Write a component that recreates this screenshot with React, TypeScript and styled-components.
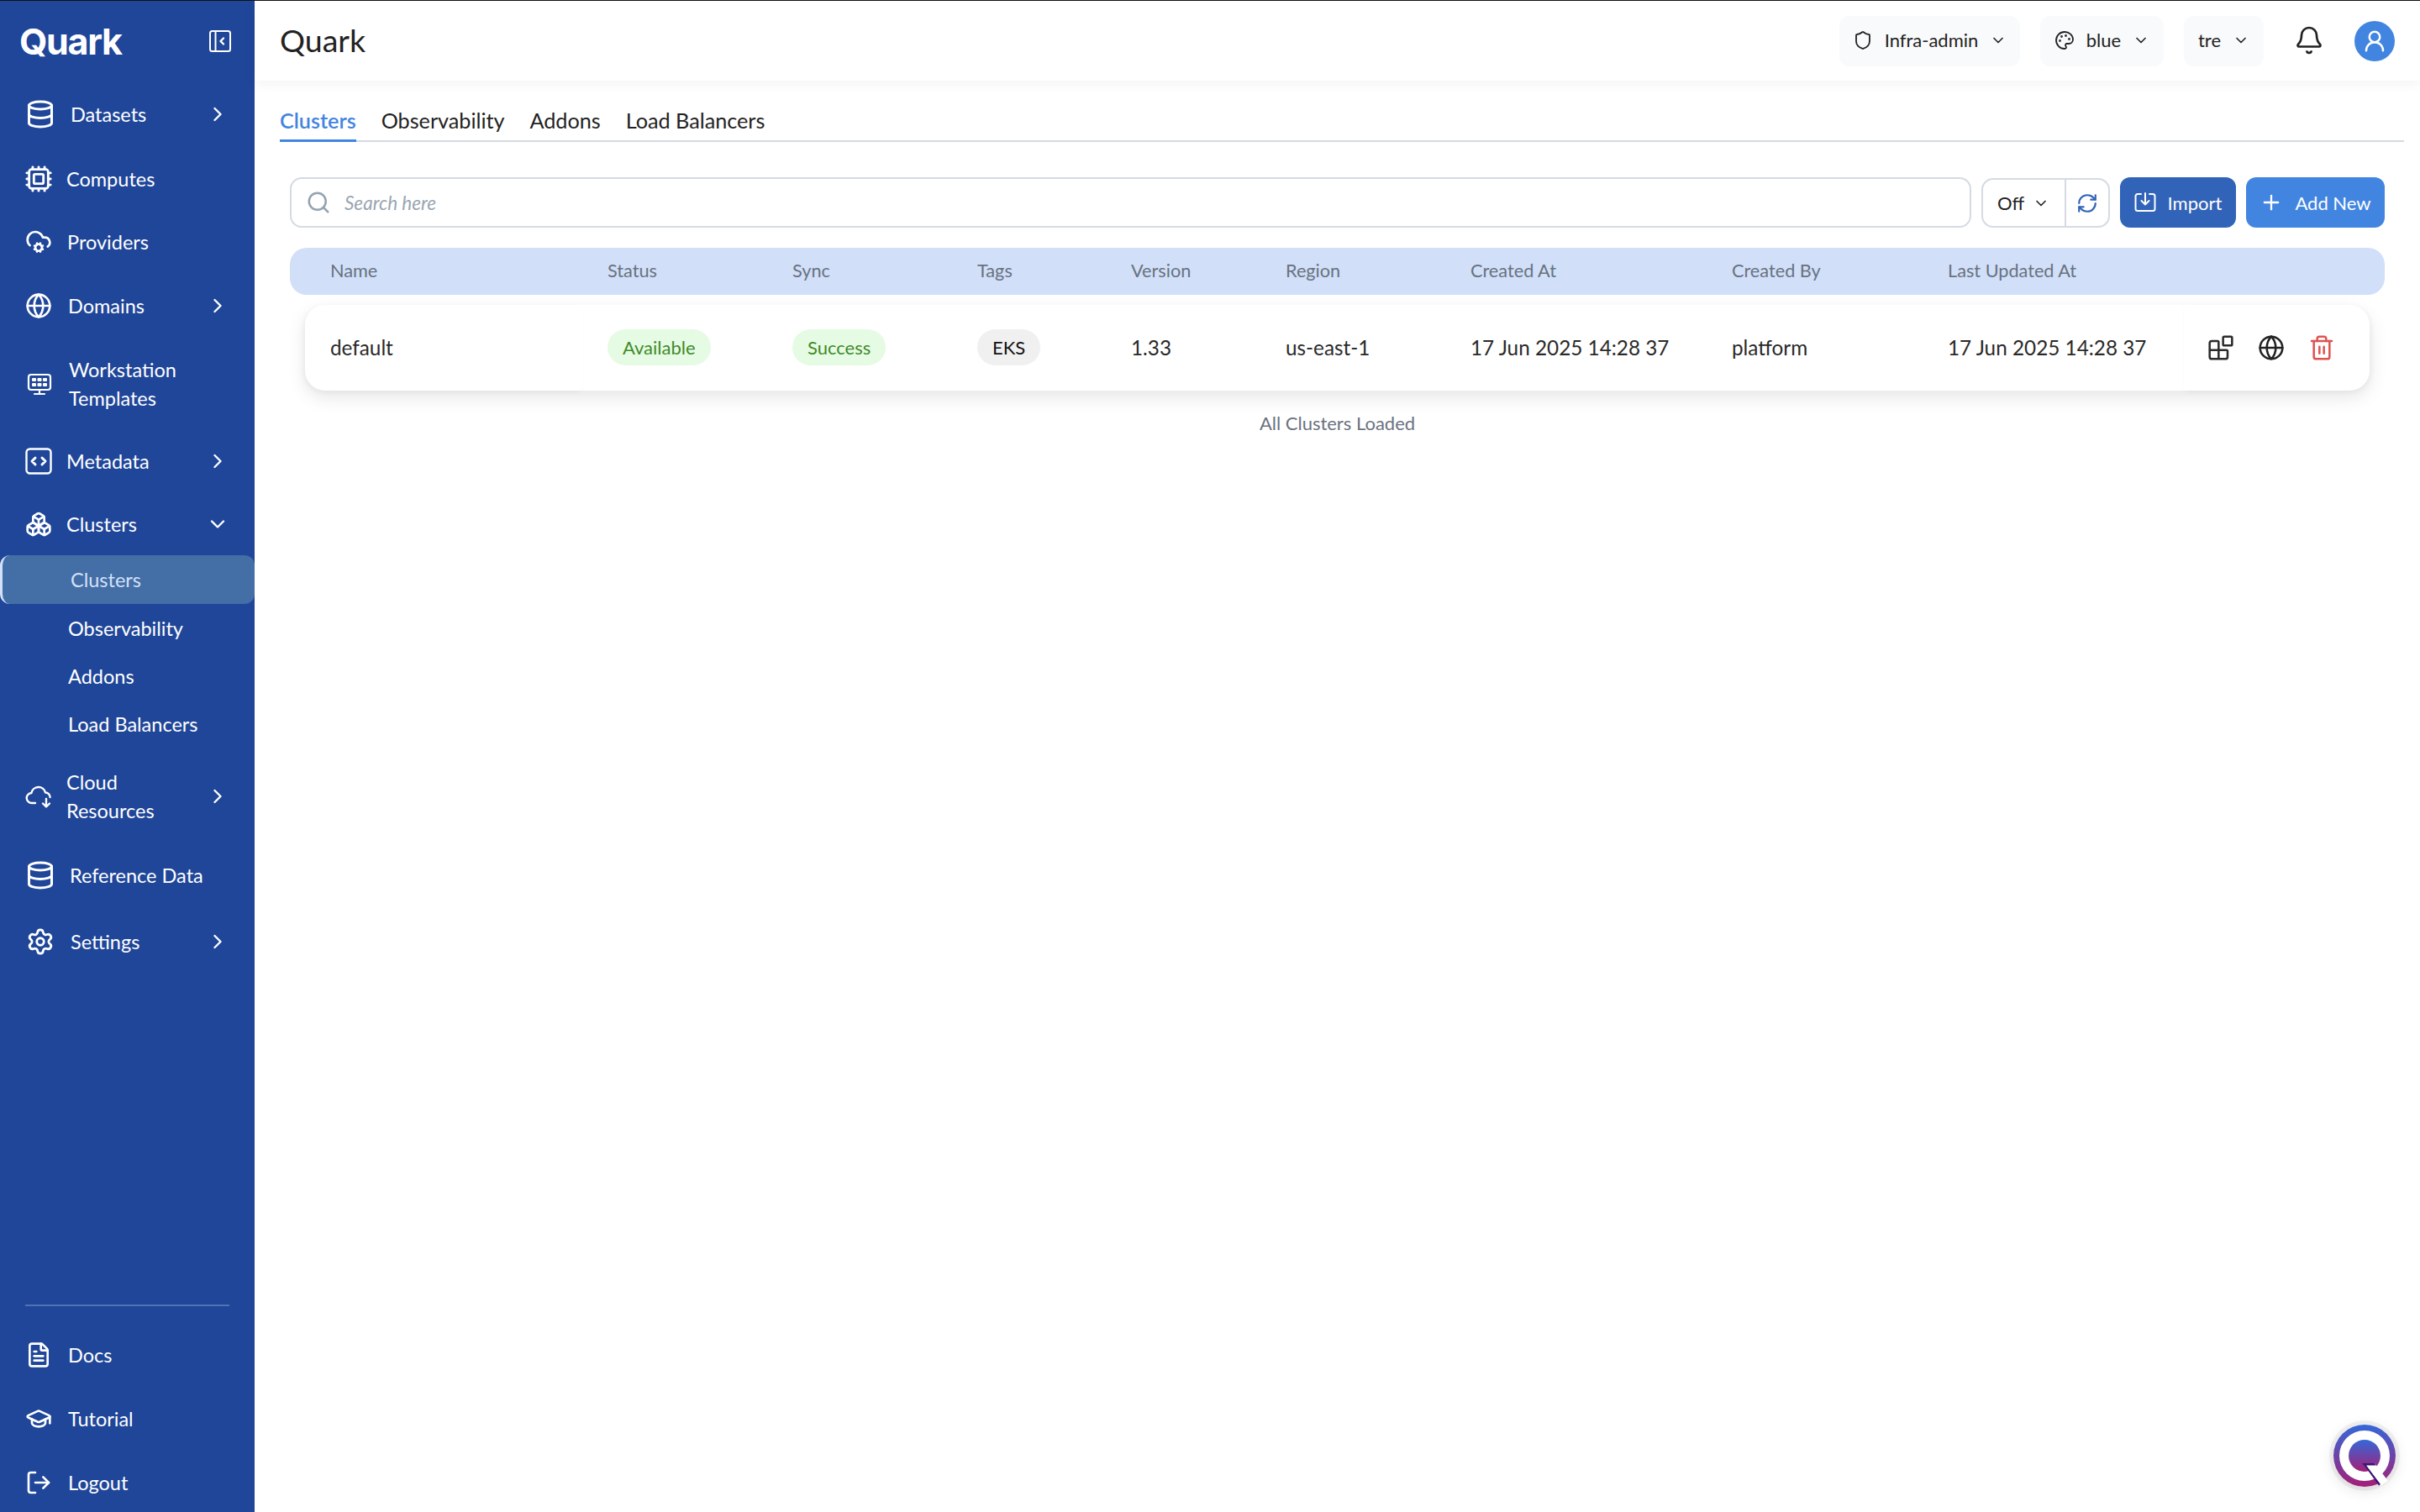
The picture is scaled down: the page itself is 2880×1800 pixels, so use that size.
import React from "react";
import styled, { createGlobalStyle } from "styled-components";
import {
  Bell,
  Blocks,
  Boxes,
  ChevronDown,
  ChevronRight,
  CloudCog,
  Cpu,
  Database,
  FileText,
  Globe,
  GraduationCap,
  LogOut,
  Palette,
  Plus,
  RefreshCw,
  Search,
  Settings,
  Shield,
  Trash2,
  UserRound,
} from "lucide-react";

const FONT = `Lato, "Noto Sans", sans-serif`;

const GlobalStyle = createGlobalStyle`
  html, body, #root { height: 100%; }
  body {
    margin: 0;
    background: #fff;
    font-family: ${FONT};
    color: #222;
  }
  * { box-sizing: border-box; }
`;

const WorkstationIcon = () => (
  <svg width="30" height="30" viewBox="0 0 30 30" fill="none" stroke="#fff" strokeWidth="2.2" strokeLinecap="round" strokeLinejoin="round">
    <rect x="2" y="4" width="26" height="18" rx="3" />
    <path d="M15 22v5M9 27h12" />
    <g fill="#fff" stroke="none">
      <rect x="6" y="8" width="5" height="4" rx="1" />
      <rect x="12.5" y="8" width="5" height="4" rx="1" />
      <rect x="19" y="8" width="5" height="4" rx="1" />
      <rect x="6" y="14" width="5" height="4" rx="1" />
      <rect x="12.5" y="14" width="5" height="4" rx="1" />
      <rect x="19" y="14" width="5" height="4" rx="1" />
    </g>
  </svg>
);

const MetadataIcon = () => (
  <svg width="32" height="32" viewBox="0 0 32 32" fill="none" stroke="#fff" strokeWidth="2.4" strokeLinecap="round" strokeLinejoin="round">
    <rect x="1.5" y="1.5" width="29" height="29" rx="4" />
    <path d="M12 12l-4 4 4 4M20 12l4 4-4 4" strokeWidth="3" />
  </svg>
);

const CloudResourcesIcon = () => (
  <svg width="32" height="32" viewBox="0 0 32 32" fill="none" stroke="#fff" strokeWidth="2.4" strokeLinecap="round" strokeLinejoin="round">
    <path d="M12 24H8a6 6 0 0 1-.6-12A8.5 8.5 0 0 1 24 11.5a5.6 5.6 0 0 1 5.6 5.5" />
    <path d="M25 19v9M21 24.5l4 4 4-4" />
  </svg>
);

const CollapseIcon = () => (
  <svg width="26" height="26" viewBox="0 0 26 26" fill="none" stroke="#fff" strokeWidth="2" strokeLinecap="round" strokeLinejoin="round">
    <rect x="1" y="1" width="24" height="24" rx="2.5" />
    <path d="M7.5 1v24" />
    <path d="M17 9.5L13.5 13l3.5 3.5" strokeWidth="2.4" />
  </svg>
);

const ImportIcon = () => (
  <svg width="26" height="26" viewBox="0 0 26 26" fill="none" stroke="#fff" strokeWidth="2" strokeLinecap="round" strokeLinejoin="round">
    <path d="M8 3H4a2.5 2.5 0 0 0-2.5 2.5v15A2.5 2.5 0 0 0 4 23h18a2.5 2.5 0 0 0 2.5-2.5v-15A2.5 2.5 0 0 0 22 3h-4" />
    <path d="M13 2v13M8.5 11l4.5 4.5 4.5-4.5" />
  </svg>
);

const QuarkBadge = () => (
  <svg width="74" height="74" viewBox="0 0 74 74">
    <defs>
      <linearGradient id="quarkGrad" x1="0" y1="0" x2="0" y2="1">
        <stop offset="0" stopColor="#3468d8" />
        <stop offset="1" stopColor="#a41f78" />
      </linearGradient>
    </defs>
    <circle cx="37" cy="37" r="37" fill="url(#quarkGrad)" />
    <circle cx="37" cy="37" r="30" fill="#fff" />
    <circle cx="37" cy="37" r="19" fill="url(#quarkGrad)" />
    <path d="M37 46h12l16 21-9 6z" fill="#fff" />
    <path d="M34 46h15l1.5 2.5H39L56 71l-2 1.5L37 49z" fill="#3b1470" />
  </svg>
);

type NavEntry = {
  label: string;
  icon?: React.ReactNode;
  height: number;
  textX: number;
  iconLeft?: number;
  arrow?: "right" | "down";
  active?: boolean;
};

const navIcon = { size: 32, color: "#fff", strokeWidth: 2 };

const navItems: NavEntry[] = [
  { label: "Datasets", icon: <Database {...navIcon} size={36} />, height: 76, textX: 84, iconLeft: 30, arrow: "right" },
  { label: "Computes", icon: <Cpu {...navIcon} size={34} />, height: 77, textX: 79, iconLeft: 29 },
  { label: "Providers", icon: <CloudCog {...navIcon} />, height: 74, textX: 80, iconLeft: 30 },
  { label: "Domains", icon: <Globe {...navIcon} />, height: 77, textX: 81, iconLeft: 30, arrow: "right" },
  { label: "Workstation\nTemplates", icon: <WorkstationIcon />, height: 110, textX: 82, iconLeft: 32 },
  { label: "Metadata", icon: <MetadataIcon />, height: 74, textX: 79, iconLeft: 30, arrow: "right" },
  { label: "Clusters", icon: <Boxes {...navIcon} />, height: 75, textX: 79, iconLeft: 30, arrow: "down" },
  { label: "Clusters", height: 58, textX: 81, active: true },
  { label: "Observability", height: 57, textX: 81 },
  { label: "Addons", height: 57, textX: 81 },
  { label: "Load Balancers", height: 57, textX: 81 },
  { label: "Cloud\nResources", icon: <CloudResourcesIcon />, height: 116, textX: 79, iconLeft: 30, arrow: "right" },
  { label: "Reference Data", icon: <Database {...navIcon} size={36} />, height: 71, textX: 83, iconLeft: 30 },
  { label: "Settings", icon: <Settings {...navIcon} size={34} />, height: 87, textX: 84, iconLeft: 31, arrow: "right" },
];

const footerItems: NavEntry[] = [
  { label: "Docs", icon: <FileText {...navIcon} />, height: 38, textX: 81, iconLeft: 30 },
  { label: "Tutorial", icon: <GraduationCap {...navIcon} />, height: 38, textX: 81, iconLeft: 30 },
  { label: "Logout", icon: <LogOut {...navIcon} />, height: 38, textX: 81, iconLeft: 30 },
];

const renderNav = (item: NavEntry, i: number) => (
  <NavRow key={i} $height={item.height} $textX={item.textX} $active={item.active}>
    <NavIcon $left={item.iconLeft ?? 0}>{item.icon}</NavIcon>
    <NavLabel>{item.label}</NavLabel>
    {item.arrow === "right" && <ChevronRight size={28} color="#fff" strokeWidth={2} />}
    {item.arrow === "down" && <ChevronDown size={28} color="#fff" strokeWidth={2} />}
  </NavRow>
);

const columns = ["Name", "Status", "Sync", "Tags", "Version", "Region", "Created At", "Created By", "Last Updated At"];

const App = () => {
  return (
    <Page>
      <GlobalStyle />
      <Sidebar>
        <Brand>
          <BrandName>Quark</BrandName>
          <CollapseIcon />
        </Brand>
        <nav>{navItems.map(renderNav)}</nav>
        <SidebarFooter>
          <Divider />
          <FooterList>{footerItems.map(renderNav)}</FooterList>
        </SidebarFooter>
      </Sidebar>
      <Main>
        <Header>
          <Title>Quark</Title>
          <HeaderActions>
            <HeaderSelect $width={215}>
              <Shield size={24} strokeWidth={1.8} />
              <span>Infra-admin</span>
              <ChevronDown size={20} strokeWidth={2} />
            </HeaderSelect>
            <HeaderSelect $width={147}>
              <Palette size={24} strokeWidth={1.8} />
              <span>blue</span>
              <ChevronDown size={20} strokeWidth={2} />
            </HeaderSelect>
            <HeaderSelect $width={95}>
              <span>tre</span>
              <ChevronDown size={20} strokeWidth={2} />
            </HeaderSelect>
            <BellButton>
              <Bell size={36} strokeWidth={1.8} color="#222" />
            </BellButton>
            <Avatar>
              <UserRound size={30} color="#fff" strokeWidth={2} />
            </Avatar>
          </HeaderActions>
        </Header>
        <Content>
          <Tabs>
            <Tab $active>Clusters</Tab>
            <Tab>Observability</Tab>
            <Tab>Addons</Tab>
            <Tab>Load Balancers</Tab>
          </Tabs>
          <ClusterPanel>
            <Toolbar>
              <SearchBox>
                <Search size={30} color="#94a3b0" strokeWidth={2} />
                <SearchInput placeholder="Search here" readOnly />
              </SearchBox>
              <RefreshGroup>
                <IntervalSelect>
                  <span>Off</span>
                  <ChevronDown size={20} strokeWidth={2} />
                </IntervalSelect>
                <RefreshButton>
                  <RefreshCw size={26} color="#3163b8" strokeWidth={2} />
                </RefreshButton>
              </RefreshGroup>
              <ActionButton $width={138} $bg="#3163b8">
                <ImportIcon />
                Import
              </ActionButton>
              <ActionButton $width={165} $bg="#4285e0">
                <Plus size={28} color="#fff" strokeWidth={2} />
                Add New
              </ActionButton>
            </Toolbar>
            <TableHead>
              {columns.map((c) => (
                <span key={c}>{c}</span>
              ))}
            </TableHead>
            <ClusterRow>
              <PinnedCell>default</PinnedCell>
              <Cell>
                <Chip $bg="#e6fbe3" $color="#3f8a2a">Available</Chip>
              </Cell>
              <Cell>
                <Chip $bg="#e6fbe3" $color="#3f8a2a">Success</Chip>
              </Cell>
              <Cell>
                <Chip $bg="#f0f0f0" $color="#111">EKS</Chip>
              </Cell>
              <Cell>1.33</Cell>
              <Cell>us-east-1</Cell>
              <Cell>17 Jun 2025 14:28 37</Cell>
              <Cell>platform</Cell>
              <Cell>17 Jun 2025 14:28 37</Cell>
              <ActionsCell>
                <Blocks size={32} color="#2b2b2b" strokeWidth={1.9} />
                <Globe size={32} color="#222" strokeWidth={1.9} />
                <Trash2 size={32} color="#e05252" strokeWidth={1.9} />
              </ActionsCell>
            </ClusterRow>
            <LoadedNote>All Clusters Loaded</LoadedNote>
          </ClusterPanel>
        </Content>
      </Main>
      <Fab>
        <QuarkBadge />
      </Fab>
    </Page>
  );
};

const Page = styled.div`
  display: flex;
  height: 100vh;
  border-top: 1px solid #111;
  overflow: hidden;
`;

const Sidebar = styled.aside`
  width: 303px;
  flex-shrink: 0;
  display: flex;
  flex-direction: column;
  background: #1f4699;
  color: #fff;
`;

const Brand = styled.div`
  height: 97px;
  display: flex;
  align-items: center;
  justify-content: space-between;
  padding: 0 28px 2px 23px;
`;

const BrandName = styled.div`
  font-family: Inter, sans-serif;
  font-size: 43px;
  font-weight: 700;
  letter-spacing: -1.3px;
`;

const NavRow = styled.div<{ $height: number; $textX: number; $active?: boolean }>`
  height: ${(p) => p.$height}px;
  display: grid;
  grid-template-columns: ${(p) => p.$textX}px 1fr auto;
  align-items: center;
  padding-right: 30px;
  border-radius: 12px;
  font-size: 23.5px;
  background: ${(p) => (p.$active ? "#436ea6" : "transparent")};
  color: ${(p) => (p.$active ? "#d3e1f8" : "#fff")};
  border-left: ${(p) => (p.$active ? "3px solid #d3e1f8" : "0")};
`;

const NavIcon = styled.div<{ $left: number }>`
  display: flex;
  align-items: center;
  padding-left: ${(p) => p.$left}px;
`;

const NavLabel = styled.div`
  white-space: pre-line;
  line-height: 34px;
`;

const SidebarFooter = styled.div`
  margin-top: auto;
  padding-bottom: 16px;
`;

const Divider = styled.div`
  height: 2px;
  margin: 0 30px 39px;
  background: #5472b3;
`;

const FooterList = styled.div`
  display: flex;
  flex-direction: column;
  gap: 38px;
`;

const Main = styled.main`
  flex: 1;
  min-width: 0;
  display: flex;
  flex-direction: column;
`;

const Header = styled.header`
  height: 95px;
  flex-shrink: 0;
  display: flex;
  align-items: center;
  justify-content: space-between;
  padding: 0 30px;
  background: #fff;
  box-shadow: 0 4px 14px rgba(0, 0, 0, 0.05);
`;

const Title = styled.h1`
  margin: 0 0 3px;
  font-size: 37.5px;
  font-weight: 400;
  color: #222;
`;

const HeaderActions = styled.div`
  display: flex;
  align-items: center;
`;

const HeaderSelect = styled.div<{ $width: number }>`
  width: ${(p) => p.$width}px;
  height: 60px;
  margin-right: 24px;
  padding-bottom: 2px;
  display: flex;
  align-items: center;
  justify-content: center;
  gap: 14px;
  border-radius: 12px;
  background: #f9fafc;
  font-size: 22px;
  color: #222;
`;

const BellButton = styled.div`
  width: 36px;
  margin: 0 36px 2px 12px;
  display: flex;
  justify-content: center;
`;

const Avatar = styled.div`
  width: 48px;
  height: 48px;
  border-radius: 50%;
  background: #4285e0;
  display: flex;
  align-items: center;
  justify-content: center;
`;

const Content = styled.div`
  flex: 1;
  padding: 0 19px 0 30px;
`;

const Tabs = styled.div`
  height: 73px;
  display: flex;
  align-items: flex-end;
  gap: 30px;
  border-bottom: 2px solid #d5dae3;
`;

const Tab = styled.div<{ $active?: boolean }>`
  height: 48px;
  margin-bottom: -2px;
  display: flex;
  align-items: flex-start;
  padding-top: 7px;
  font-size: 25.2px;
  color: ${(p) => (p.$active ? "#4285e0" : "#222")};
  font-weight: ${(p) => (p.$active ? 600 : 400)};
  border-bottom: 3px solid ${(p) => (p.$active ? "#4285e0" : "transparent")};
`;

const ClusterPanel = styled.div`
  padding: 42px 23px 0 12px;
`;

const Toolbar = styled.div`
  display: flex;
  gap: 12px;
  height: 60px;
`;

const SearchBox = styled.div`
  flex: 1;
  display: flex;
  align-items: center;
  gap: 14px;
  padding-left: 17px;
  border: 2px solid #d5dae3;
  border-radius: 14px;
`;

const SearchInput = styled.input`
  flex: 1;
  border: 0;
  outline: 0;
  background: transparent;
  font-family: ${FONT};
  font-size: 22.5px;
  font-style: italic;
  &::placeholder {
    color: #9aa6b2;
    opacity: 1;
  }
`;

const RefreshGroup = styled.div`
  width: 153px;
  margin-top: 1px;
  display: flex;
  border: 2px solid #d5dae3;
  border-radius: 14px;
`;

const IntervalSelect = styled.div`
  width: 99px;
  display: flex;
  align-items: center;
  gap: 10px;
  padding-left: 17px;
  border-right: 2px solid #d5dae3;
  font-size: 22px;
`;

const RefreshButton = styled.div`
  flex: 1;
  display: flex;
  align-items: center;
  justify-content: center;
`;

const ActionButton = styled.div<{ $width: number; $bg: string }>`
  width: ${(p) => p.$width}px;
  display: flex;
  align-items: center;
  justify-content: center;
  gap: 14px;
  border-radius: 12px;
  background: ${(p) => p.$bg};
  color: #fff;
  font-size: 22px;
`;

const TableHead = styled.div`
  height: 56px;
  margin-top: 24px;
  padding: 0 0 2px 48px;
  display: grid;
  grid-template-columns: 330px 220px 220px 183px 184px 220px 311px 257px 1fr;
  align-items: center;
  border-radius: 20px;
  background: #d1dff9;
  color: #68727f;
  font-size: 21.7px;
`;

const ClusterRow = styled.div`
  height: 102px;
  margin: 12px 18px 0;
  display: grid;
  grid-template-columns: 329px 220px 220px 183px 184px 220px 311px 257px 312px 1fr;
  border-radius: 24px;
  background: #fff;
  box-shadow: 0 8px 22px rgba(0, 0, 0, 0.1);
  font-size: 24.3px;
  color: #2a2a2a;
`;

const Cell = styled.div`
  display: flex;
  align-items: center;
  padding: 0 0 1px 31px;
  white-space: nowrap;
`;

const PinnedCell = styled(Cell)`
  padding-left: 30px;
  border-radius: 24px 0 0 24px;
  box-shadow: -2px 2px 6px rgba(0, 0, 0, 0.04);
`;

const ActionsCell = styled(Cell)`
  padding-left: 28px;
  gap: 28px;
  border-radius: 0 24px 24px 0;
  box-shadow: 2px 2px 6px rgba(0, 0, 0, 0.04);
`;

const Chip = styled.span<{ $bg: string; $color: string }>`
  height: 43px;
  padding: 0 18px;
  display: inline-flex;
  align-items: center;
  border-radius: 22px;
  background: ${(p) => p.$bg};
  color: ${(p) => p.$color};
  font-size: 22px;
`;

const LoadedNote = styled.div`
  margin-top: 25px;
  text-align: center;
  font-size: 22px;
  color: #6b7280;
`;

const Fab = styled.div`
  position: fixed;
  right: 29px;
  bottom: 30px;
  width: 74px;
  height: 74px;
  border-radius: 50%;
  box-shadow: 0 0 0 5px rgba(0, 0, 0, 0.05), 0 4px 18px rgba(0, 0, 0, 0.12);
`;

export default App;
